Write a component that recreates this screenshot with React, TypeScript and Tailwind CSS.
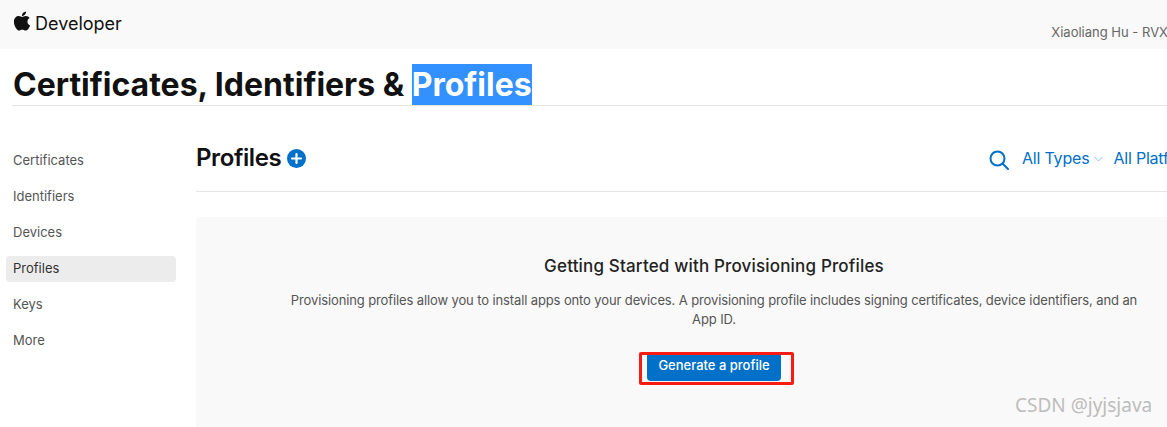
import { FaApple } from "react-icons/fa";

const navItems = ["Certificates", "Identifiers", "Devices", "Profiles", "Keys", "More"];

const SearchIcon = () => (
  <svg width="20" height="20" viewBox="0 0 20 20" fill="none" stroke="#0070c9" strokeWidth="2">
    <circle cx="8.5" cy="8.5" r="7" />
    <path d="M13.5 13.5L19 19" strokeLinecap="round" />
  </svg>
);

const PlusCircle = () => (
  <svg width="19" height="19" viewBox="0 0 19 19">
    <circle cx="9.5" cy="9.5" r="9.5" fill="#0070c9" />
    <path d="M9.5 5v9M5 9.5h9" stroke="#fff" strokeWidth="2.2" strokeLinecap="round" />
  </svg>
);

export default function App() {
  return (
    <div className="relative h-[427px] w-[1167px] overflow-hidden bg-white font-['Inter',sans-serif]">
      <header className="flex h-[49px] items-start justify-between bg-[#f9f9f9]">
        <div className="flex items-center gap-[4px] pl-[13px] pt-[10px] text-[#111111]">
          <FaApple className="mb-[6px] h-[22px] w-[18px]" />
          <span className="text-[18px] leading-[26px]">Developer</span>
        </div>
        <span className="mr-[-1px] whitespace-nowrap pt-[23px] text-[13px] leading-[18px] text-[#666666]">Xiaoliang Hu - RVX</span>
      </header>

      <div className="ml-[12px] h-[57px] border-b border-[#e2e2e2] pl-px pt-[15px]">
        <h1 className="whitespace-nowrap text-[32px] font-bold leading-[41px] text-[#111111]">
          Certificates, Identifiers &amp; <span className="inline-block bg-[#3390ff] leading-[41px] text-white">Profiles</span>
        </h1>
      </div>

      <div className="flex">
        <nav className="ml-[6px] flex w-[170px] shrink-0 flex-col pt-[37px]">
          {navItems.map((item) => (
            <div key={item} className="flex h-[36px] items-center">
              <span
                className={`flex h-[26px] w-full items-center rounded-[4px] px-[7px] text-[13px] ${
                  item === "Profiles" ? "bg-[#ececec] text-[#333333]" : "text-[#555555]"
                }`}
              >
                {item}
              </span>
            </div>
          ))}
        </nav>

        <main className="ml-[20px] min-w-0 flex-1">
          <div className="flex h-[86px] items-center justify-between border-b border-[#e5e5e5] pt-[19px]">
            <div className="flex items-center gap-[6px]">
              <h2 className="text-[24px] font-semibold leading-[30px] tracking-[-0.4px] text-[#111111]">Profiles</h2>
              <PlusCircle />
            </div>
            <div className="flex w-[178px] shrink-0 items-center overflow-hidden whitespace-nowrap text-[16px] tracking-[-0.2px] text-[#0070c9]">
              <span className="mr-[13px] mt-[3px] shrink-0">
                <SearchIcon />
              </span>
              <span>All Types</span>
              <svg className="ml-[5px] mr-[10px] mt-[2px] shrink-0" width="9" height="6" viewBox="0 0 9 6" fill="none" stroke="#8fbfe6" strokeWidth="1">
                <path d="M0.5 1l4 4 4-4" />
              </svg>
              <span>All Platforms</span>
            </div>
          </div>

          <section className="mt-[25px] flex h-[220px] w-[1036px] flex-col items-center rounded-l-[4px] bg-[#f9f9f9] pt-[38px]">
            <h3 className="text-[17px] font-medium leading-[22px] tracking-[0.17px] text-[#222222]">Getting Started with Provisioning Profiles</h3>
            <p className="mt-[14px] w-[870px] text-center text-[13px] leading-[19px] tracking-[-0.12px] text-[#555555]">
              Provisioning profiles allow you to install apps onto your devices. A provisioning profile includes signing certificates, device identifiers, and an App ID.
            </p>
            <button className="mt-[23px] h-[29px] w-[134px] rounded-[4px] bg-[#0070c9] pb-[1px] text-[13px] font-medium text-white">
              Generate a profile
            </button>
          </section>
        </main>
      </div>

      <div className="absolute left-[639px] top-[352px] h-[33px] w-[155px] rounded-[2px] border-[3px] border-[#fb1b12]" />
      <span className="absolute left-[1015px] top-[394px] font-['Noto_Sans',sans-serif] text-[19px] leading-[22px] text-[#bdbdbd]">CSDN @jyjsjava</span>
    </div>
  );
}
